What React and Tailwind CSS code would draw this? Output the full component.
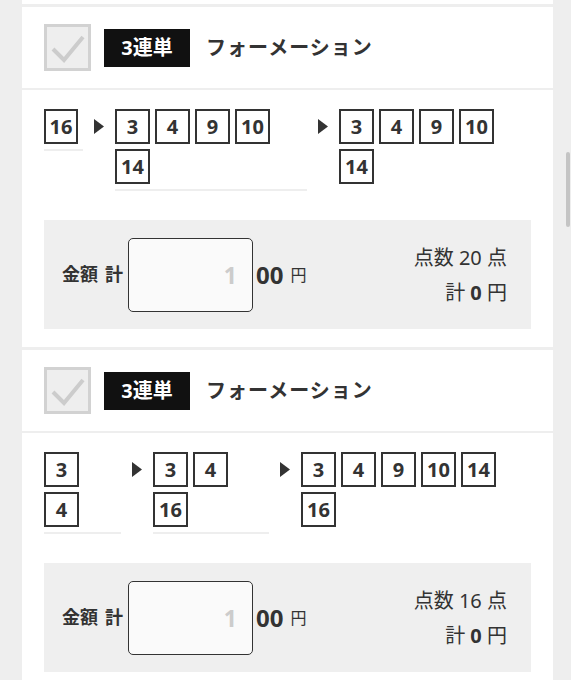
import React from 'react';

const cards = [
  {
    groups: [
      { width: 'w-[39px]', nums: [16] },
      { width: 'w-[192px]', nums: [3, 4, 9, 10, 14] },
      { width: 'flex-1', nums: [3, 4, 9, 10, 14], last: true },
    ],
    points: 20,
  },
  {
    groups: [
      { width: 'w-[77px]', nums: [3, 4] },
      { width: 'w-[116px]', nums: [3, 4, 16] },
      { width: 'flex-1', nums: [3, 4, 9, 10, 14, 16], last: true },
    ],
    points: 16,
  },
];

const Checkbox = () => (
  <div className="w-[47px] h-[47px] border-[3px] border-[#d2d2d2] bg-[#eeeeee] flex items-center justify-center shrink-0">
    <svg width="41" height="41" viewBox="0 0 41 41">
      <polyline points="6,22 17,33 36,10" fill="none" stroke="#cccccc" strokeWidth="4" />
    </svg>
  </div>
);

const Arrow = () => (
  <div className="w-[32px] h-[35px] flex items-center justify-center shrink-0">
    <svg width="10" height="15" viewBox="0 0 10 15">
      <polygon points="0,0 10,7.5 0,15" fill="#333333" />
    </svg>
  </div>
);

const NumBox = ({ n }) => (
  <div className="w-[35px] h-[35px] mr-[5px] mb-[5px] border-2 border-[#333] flex items-center justify-center text-[20px] font-bold leading-none">
    {n}
  </div>
);

const Card = ({ card }) => (
  <div className="mt-[3px]">
    {/* header */}
    <div className="h-[81px] bg-white flex items-center pl-[22px]">
      <Checkbox />
      <div className="ml-[13px] w-[86px] h-[38px] bg-[#111] text-white flex items-center justify-center text-[20px] font-bold">
        3連単
      </div>
      <div className="ml-[16px] text-[20px] font-bold tracking-[1px] text-[#333]">フォーメーション</div>
    </div>

    {/* body */}
    <div className="mt-[2px] bg-white px-[22px] pt-[19px] pb-[18px]">
      <div className="flex items-start">
        {card.groups.map((g, i) => (
          <React.Fragment key={i}>
            {i > 0 && <Arrow />}
            <div
              className={`${g.width} flex flex-wrap border-b-2 ${
                g.last ? 'border-transparent' : 'border-[#eeeeee]'
              }`}
            >
              {g.nums.map((n) => (
                <NumBox key={n} n={n} />
              ))}
            </div>
          </React.Fragment>
        ))}
      </div>

      <div className="mt-[29px] h-[109px] bg-[#efefef] flex items-center justify-between pl-[18px] pr-[24px]">
        <div className="flex items-center">
          <span className="text-[18px] font-bold">金額</span>
          <span className="ml-[7px] text-[18px] font-bold mr-[5px]">計</span>
          <input
            readOnly
            placeholder="1"
            className="w-[125px] h-[74px] border-[1.5px] border-[#333] rounded-[5px] bg-[#fafafa] text-right pr-[15px] text-[23px] font-bold outline-none placeholder:text-[#cccccc]"
          />
          <span className="ml-[3px] text-[24px] font-bold">00</span>
          <span className="ml-[7px] text-[16px]">円</span>
        </div>
        <div className="text-right text-[20px] leading-[35px]">
          <div>点数 {card.points} 点</div>
          <div>
            計 <span className="font-bold">0</span> 円
          </div>
        </div>
      </div>
    </div>
  </div>
);

export default function App() {
  return (
    <div className="relative min-h-screen bg-[#eeeeee] pl-[22px] pr-[18px] font-['Noto_Sans','Noto_Sans_CJK_JP',sans-serif] text-[#333]">
      <div className="h-[4px] bg-white" />
      {cards.map((c, i) => (
        <Card key={i} card={c} />
      ))}
      {/* scrollbar thumb */}
      <div className="fixed right-[1px] top-[152px] w-[4px] h-[75px] rounded-full bg-[#c4c4c4]" />
    </div>
  );
}
